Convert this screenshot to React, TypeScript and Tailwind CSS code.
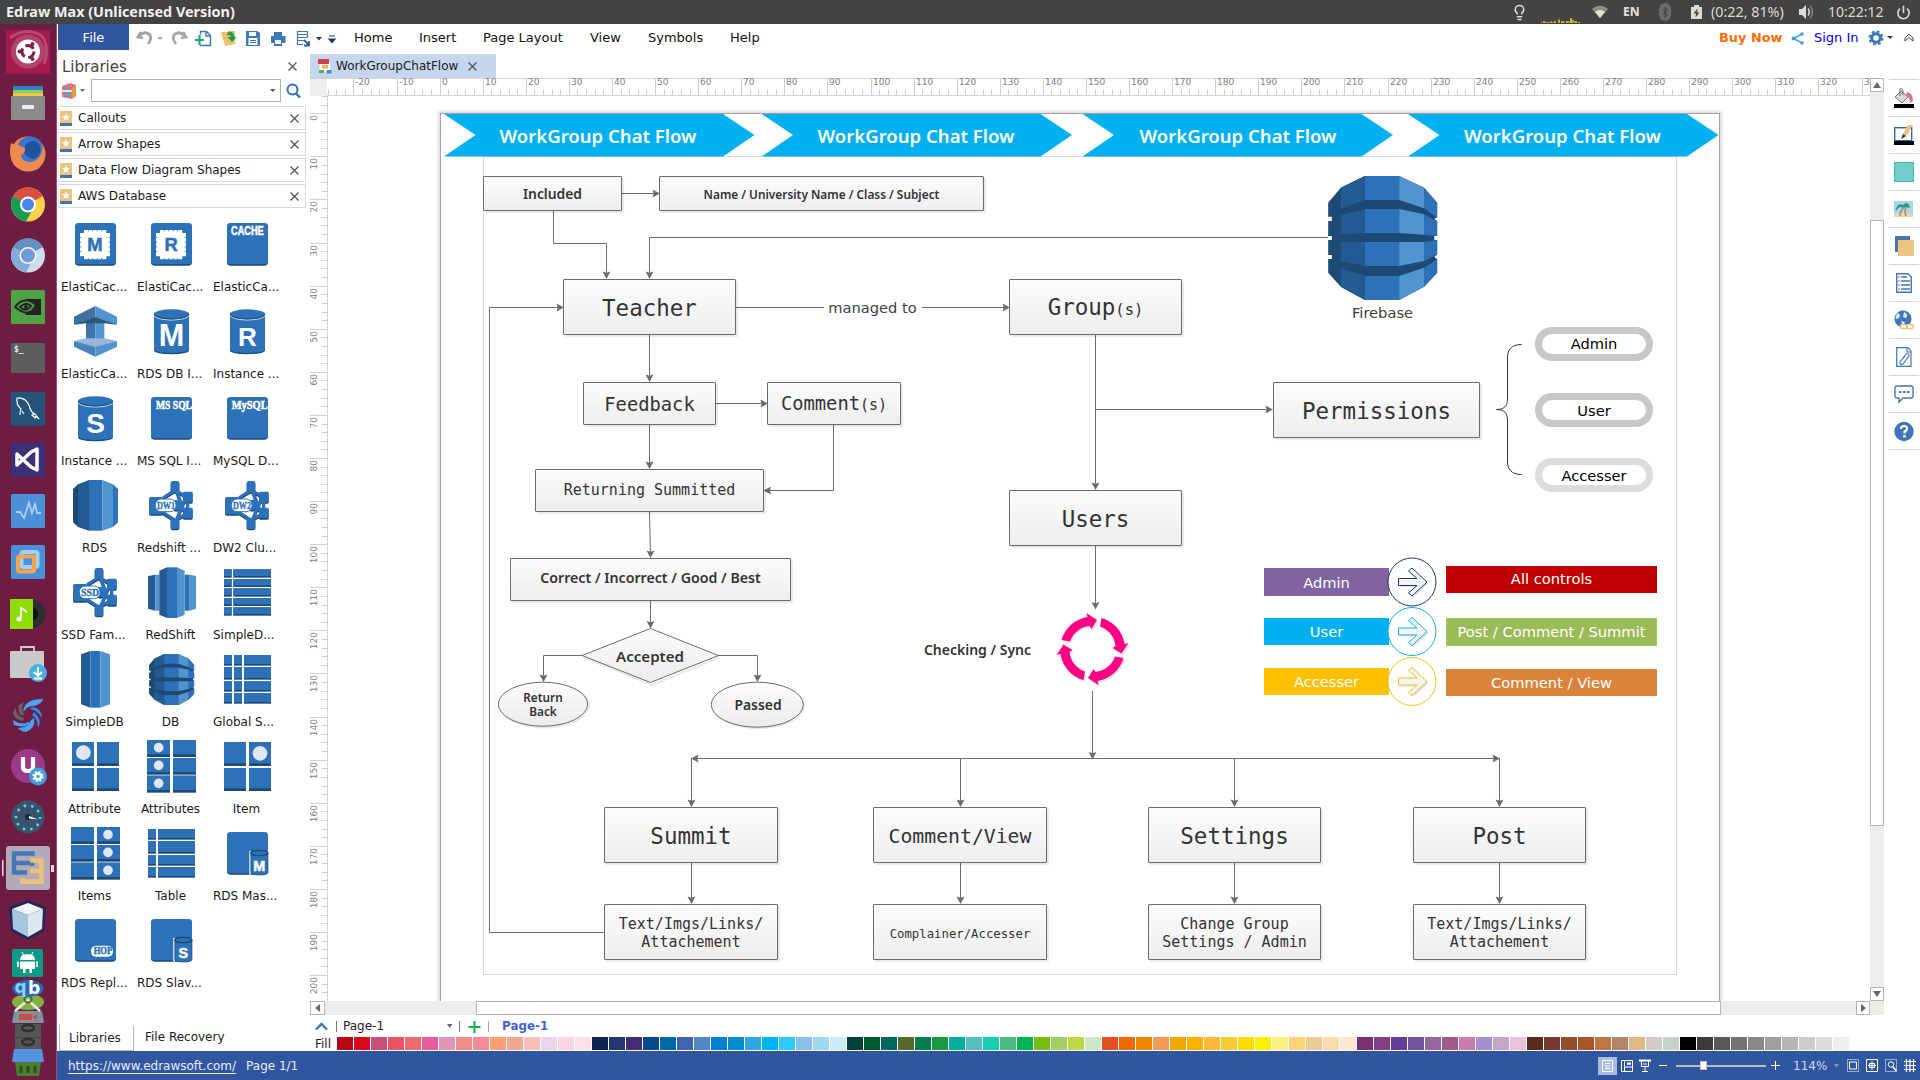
import React from "react";
import { Bluetooth, Volume2, Power, Lightbulb } from "lucide-react";

const BLUE = "#2d72b8";
const DARK = "#1d4a75";
const MID = "#235a92";
const LIGHT = "#5294cf";

/* ---------- library shape icons (viewBox 201 x 174) ---------- */

const Tile = () => (
  <>
    <rect x="42" y="25" width="123" height="124" rx="10" fill={DARK} />
    <rect x="42" y="21" width="123" height="124" rx="10" fill={BLUE} />
  </>
);

const Chip = ({ letter }: { letter: string }) => (
  <>
    <Tile />
    <path d="M69 42H136V51H147V121H136V130H69V121H57V51H69Z" fill="#fff" />
    <path d="M82 41V46M95 41V46M109 41V46M122 41V46M82 126V131M95 126V131M109 126V131M122 126V131M56 64H61M56 78H61M56 93H61M56 107H61M143 64H148M143 78H148M143 93H148M143 107H148" stroke={BLUE} strokeWidth="2.500" />
    <text x="102" y="105" textAnchor="middle" fontSize="55" fontWeight="700" fill={BLUE} stroke={BLUE} strokeWidth="1.500" fontFamily="Liberation Sans, sans-serif">{letter}</text>
  </>
);

const Banner = ({ text, serif, x, w }: { text: string; serif?: boolean; x: number; w: number }) => (
  <>
    <Tile />
    <text x={x} y="58" textLength={w} lengthAdjust="spacingAndGlyphs" fontSize="36" fontWeight="700" fill="#fff" stroke="#fff" strokeWidth="1.500" fontFamily={serif ? "Liberation Serif, serif" : "Liberation Sans, sans-serif"}>{text}</text>
  </>
);

const Cylinder = ({ letter, size }: { letter: string; size: number }) => (
  <>
    <path d="M51 34V142Q51 153 103 154Q156 153 156 142V34Z" fill={DARK} />
    <path d="M51 32V139Q51 149 103 150Q156 149 156 139V32Z" fill={BLUE} />
    <path d="M51 38Q60 50 103 51Q147 50 156 38" stroke="#fff" strokeWidth="2.500" fill="none" />
    <ellipse cx="103.500" cy="33" rx="52.500" ry="14" fill={BLUE} />
    <path d="M51 33Q56 47 103 48Q151 47 156 33" stroke={DARK} strokeWidth="3" fill="none" />
    <text x="103.500" y="128" textAnchor="middle" fontSize={size} fontWeight="700" fill="#fff" fontFamily="Liberation Sans, sans-serif">{letter}</text>
  </>
);

const Spool = () => (
  <>
    <path d="M75 60H103V112H75Z" fill="#3d73a6" />
    <path d="M103 60H130V112H103Z" fill={LIGHT} />
    <path d="M39 41L103 9V52L39 65Z" fill="#41729f" />
    <path d="M168 41L103 9V52L168 65Z" fill={LIGHT} />
    <path d="M39 65L103 43L168 65L130 61H75Z" fill="#2f5578" />
    <path d="M39 114L75 106H130L168 114L103 134Z" fill="#9ab4da" />
    <path d="M39 114L103 132V161L39 131Z" fill="#4b83b8" />
    <path d="M168 114L103 132V161L168 131Z" fill={LIGHT} />
  </>
);

const Barrel = () => (
  <>
    <path d="M36 36L51 22V150L36 136Z" fill={DARK} />
    <path d="M51 22L84 9V161L51 150Z" fill={MID} />
    <path d="M84 9H124V161H84Z" fill={BLUE} />
    <path d="M124 9L156 22V150L124 161Z" fill={LIGHT} />
    <path d="M156 22L171 36V136L156 150Z" fill={BLUE} />
  </>
);

const Cluster = ({ text }: { text: string }) => (
  <>
    {[4, 0].map((dy) => (
      <g key={dy} transform={`translate(0 ${dy})`} fill={dy ? DARK : BLUE} stroke={dy ? DARK : BLUE}>
        <rect x="101" y="12" width="26" height="34" rx="6" strokeWidth="0" />
        <rect x="101" y="124" width="26" height="32" rx="6" strokeWidth="0" />
        <rect x="138" y="44" width="29" height="32" rx="4" strokeWidth="0" />
        <rect x="138" y="92" width="29" height="32" rx="4" strokeWidth="0" />
        <path d="M113 40L78 62M113 40L150 58M113 128L78 106M113 128L150 110M152 60V110M118 40L144 108M118 128L146 62" fill="none" strokeWidth="9" />
        <rect x="36" y="60" width="42" height="52" rx="5" strokeWidth="0" />
        <circle cx="118" cy="84" r="16" strokeWidth="0" />
      </g>
    ))}
    <rect x="55" y="66" width="62" height="38" rx="17" fill="#fff" stroke={BLUE} strokeWidth="3" />
    <text x="60" y="96" textLength="54" lengthAdjust="spacingAndGlyphs" fontSize="31" fontWeight="700" fill={BLUE} stroke={BLUE} strokeWidth="1" fontFamily="Liberation Serif, serif">{text}</text>
  </>
);

const RedShift = () => (
  <>
    <path d="M33 36L55 32V140L33 134Z" fill={MID} />
    <path d="M55 32H68V140H55Z" fill={LIGHT} />
    <path d="M143 32H158V140H143Z" fill={BLUE} />
    <path d="M158 32L177 36V134L158 140Z" fill={LIGHT} />
    <path d="M67 20L90 10V162L67 152Z" fill={MID} />
    <path d="M90 10H120V162H90Z" fill={BLUE} />
    <path d="M120 10L143 20V152L120 162Z" fill={LIGHT} />
  </>
);

const Prism = () => (
  <>
    <path d="M60 10L88 0V170L60 160Z" fill={MID} />
    <path d="M88 0H118V170H88Z" fill={BLUE} />
    <path d="M118 0L147 10V160L118 170Z" fill={LIGHT} />
  </>
);

const Cells = ({ cols, rows, dots = [], r = 0 }: { cols: number[][]; rows: number[][]; dots?: number[][]; r?: number }) => (
  <>
    {cols.map(([x0, x1]) => rows.map(([y0, y1]) => (
      <g key={`${x0}-${y0}`}>
        <rect x={x0} y={y0} width={x1 - x0} height={y1 - y0} fill={DARK} />
        <rect x={x0} y={y0} width={x1 - x0} height={y1 - y0 - (r ? 8 : 5)} fill={BLUE} />
      </g>
    )))}
    {dots.map(([cx, cy]) => <circle key={`${cx}-${cy}`} cx={cx} cy={cy} r={r} fill="#e1e7f2" />)}
  </>
);

const MiniDb = ({ letter }: { letter: string }) => (
  <>
    <Tile />
    <path d="M111 149V80H165" stroke="#fff" strokeWidth="4" fill="none" />
    <path d="M114 84V142Q114 150 139 150Q165 150 165 142V84Z" fill={BLUE} stroke={DARK} strokeWidth="2" />
    <ellipse cx="139" cy="84" rx="26" ry="8" fill={BLUE} stroke={DARK} strokeWidth="4" />
    <text x="139" y="138" textAnchor="middle" fontSize="43" fontWeight="700" fill="#fff" stroke="#fff" strokeWidth="1.500" fontFamily="Liberation Sans, sans-serif">{letter}</text>
  </>
);

const Hop = () => (
  <>
    <Tile />
    <rect x="90" y="101" width="66" height="33" rx="15" fill="#fff" />
    <text x="98" y="127" textLength="56" lengthAdjust="spacingAndGlyphs" fontSize="29" fontWeight="700" fill={BLUE} stroke={BLUE} strokeWidth="1.500" fontFamily="Liberation Serif, serif">HOP</text>
  </>
);

/* Faceted database ball, used in the palette and on the board */
const DbBall = () => (
  <>
    <path d="M118 608L149 563L208 528H292L353 563L385 608V652L378 656L385 664V708H378V720H385V764L378 770L385 778V818L353 860L292 900H208L149 860L118 818V777H127V765H118V720H127V708H118V663H127V650H118Z" fill={DARK} />
    <path d="M149 563L208 528V600L149 626ZM149 645L208 627V699L149 704ZM149 727L208 726V798L149 783ZM149 804L208 828V900L149 860Z" fill="#225a91" />
    <path d="M208 528H292V600H208ZM208 627H292V699H208ZM208 726H292V798H208ZM208 828H292V900H208Z" fill={BLUE} />
    <path d="M292 528L353 563V625L292 600ZM292 627L353 643V704L292 699ZM292 726H353V783L292 798ZM292 828L353 803V860L292 900Z" fill={LIGHT} />
    <path d="M353 563L385 608V654L353 625ZM353 643L385 665V708L353 704ZM353 726L385 720V763L353 783ZM353 803L385 778V818L353 860Z" fill={BLUE} />
  </>
);

const rows3 = [[6, 57], [60, 110], [113, 164]];
const rows4 = [[12, 44], [48, 86], [91, 122], [126, 158]];
const shapes: { label: string; icon: React.ReactNode; cut?: boolean }[] = [
  { label: "ElastiCac...", icon: <Chip letter="M" />, cut: true },
  { label: "ElastiCac...", icon: <Chip letter="R" />, cut: true },
  { label: "ElasticCa...", icon: <Banner text="CACHE" x={54} w={98} />, cut: true },
  { label: "ElasticCa...", icon: <Spool />, cut: true },
  { label: "RDS DB I...", icon: <Cylinder letter="M" size={92} />, cut: true },
  { label: "Instance ...", icon: <Cylinder letter="R" size={78} />, cut: true },
  { label: "Instance ...", icon: <Cylinder letter="S" size={84} />, cut: true },
  { label: "MS SQL I...", icon: <Banner text="MS SQL" serif x={57} w={108} />, cut: true },
  { label: "MySQL D...", icon: <Banner text="MySQL" serif x={56} w={108} />, cut: true },
  { label: "RDS", icon: <Barrel /> },
  { label: "Redshift ...", icon: <Cluster text="DW1" />, cut: true },
  { label: "DW2 Clu...", icon: <Cluster text="DW2" />, cut: true },
  { label: "SSD Fam...", icon: <Cluster text="SSD" />, cut: true },
  { label: "RedShift", icon: <RedShift /> },
  { label: "SimpleD...", icon: <Cells cols={[[33, 56], [61, 174]]} rows={[[16, 41], [45, 69], [73, 98], [102, 126], [130, 155]]} />, cut: true },
  { label: "SimpleDB", icon: <Prism /> },
  { label: "DB", icon: <g transform="translate(-23.500 -208) scale(.506 .411)"><DbBall /></g> },
  { label: "Global S...", icon: <Cells cols={[[33, 57], [63, 87], [93, 174]]} rows={rows4} />, cut: true },
  { label: "Attribute", icon: <Cells cols={[[33, 99], [108, 174]]} rows={[[12, 84], [90, 159]]} dots={[[67, 44]]} r={22} /> },
  { label: "Attributes", icon: <Cells cols={[[30, 99], [108, 177]]} rows={rows3} dots={[[65, 29], [65, 82], [65, 136]]} r={14.5} /> },
  { label: "Item", icon: <Cells cols={[[33, 99], [108, 174]]} rows={[[12, 84], [90, 159]]} dots={[[141, 46]]} r={22} /> },
  { label: "Items", icon: <Cells cols={[[30, 99], [108, 177]]} rows={rows3} dots={[[141, 29], [141, 82], [141, 136]]} r={14.5} /> },
  { label: "Table", icon: <Cells cols={[[33, 57], [63, 174]]} rows={rows4} /> },
  { label: "RDS Mas...", icon: <MiniDb letter="M" />, cut: true },
  { label: "RDS Repl...", icon: <Hop />, cut: true },
  { label: "RDS Slav...", icon: <MiniDb letter="S" />, cut: true },
];

/* ---------- launcher ---------- */

const launcher: React.ReactNode[] = [
  <>
    <rect x="6" y="4" width="44" height="44" rx="3" fill="#a41c4e" />
    <path d="M10 12Q26 0 42 10Q50 22 44 38" stroke="#c9668a" strokeWidth="3" fill="none" opacity=".6" />
    <circle cx="28" cy="25.500" r="17" fill="#c26b8c" opacity=".5" />
    <circle cx="28" cy="25.500" r="12" fill="#fff" />
    <circle cx="28" cy="25.500" r="6" fill="none" stroke="#7b1f46" strokeWidth="3" strokeDasharray="9 3.500" />
    <circle cx="19.500" cy="25.500" r="2" fill="#7b1f46" /><circle cx="32.500" cy="18" r="2" fill="#7b1f46" /><circle cx="32.500" cy="33" r="2" fill="#7b1f46" />
  </>,
  <>
    <rect x="13" y="9" width="30" height="5" fill="#2c7fd0" /><rect x="13" y="13" width="30" height="4" fill="#7ed552" /><rect x="13" y="16" width="30" height="4" fill="#f3c548" />
    <rect x="11" y="19" width="34" height="24" rx="1" fill="#8b8b8b" /><rect x="22" y="28" width="12" height="4" rx="1" fill="#eee" />
  </>,
  <>
    <circle cx="28" cy="26" r="17.500" fill="#ee8b4c" />
    <circle cx="30" cy="21.500" r="13" fill="#3c76cf" />
    <path d="M27 15Q36 10 40 18Q42 27 34 31Q25 30 23 22Z" fill="#23529c" />
    <path d="M11 15Q14 17 18 17L25 20Q26 25 21 27Q22 35 32 34Q42 31 43 18Q48 32 38 41Q24 47 14 37Q8 27 11 15Z" fill="#ee8b4c" />
  </>,
  <>
    <circle cx="28" cy="25.500" r="17" fill="#fbd04b" />
    <path d="M28 25.500L13.300 17A17 17 0 0 1 42.700 17Z" fill="#dc4e41" />
    <path d="M28 25.500L13.300 17A17 17 0 0 0 26 42.400L34 28Z" fill="#199a57" />
    <circle cx="28" cy="25.500" r="8" fill="#fff" /><circle cx="28" cy="25.500" r="6" fill="#4a84ee" />
  </>,
  <>
    <circle cx="28" cy="25.500" r="17" fill="#cddcee" />
    <path d="M28 25.500L13.300 17A17 17 0 0 1 42.700 17Z" fill="#6590c0" />
    <path d="M28 25.500L13.300 17A17 17 0 0 0 26 42.400L34 28Z" fill="#84acda" />
    <circle cx="28" cy="25.500" r="8.500" fill="#fff" /><circle cx="28" cy="25.500" r="7" fill="#6f9ad2" />
  </>,
  <>
    <rect x="11" y="9" width="34" height="34" rx="1.500" fill="#4da345" />
    <path d="M26 18H41V34H26Z" fill="#222" />
    <path d="M15 26Q24 14 36 24Q29 38 15 26Z" fill="#4da345" stroke="#222" strokeWidth="1.800" />
    <path d="M20 26Q26 20 31 25Q26 32 20 26Z" fill="none" stroke="#222" strokeWidth="1.800" /><circle cx="26" cy="26" r="2" fill="#222" />
  </>,
  <>
    <rect x="11" y="11" width="34" height="30" rx="1" fill="#5d5d5d" />
    <text x="14" y="20" fontSize="8" fontWeight="700" fill="#eee" fontFamily="DejaVu Sans Mono, monospace">$_</text>
  </>,
  <>
    <rect x="11" y="9" width="34" height="34" rx="1.500" fill="#24537a" />
    <path d="M20 32Q20 28 21 26Q16 22 17 15Q25 14 29 22Q31 30 35 31L39 36M22 28L24 31M35 31L32 32L35 35L36 33L39 36" stroke="#fff" strokeWidth="1.200" fill="none" />
  </>,
  <>
    <rect x="11" y="9" width="34" height="34" rx="1.500" fill="#3d3079" />
    <path d="M17 20L31 33L37 36V15L31 18L17 31Z" fill="none" stroke="#fff" strokeWidth="3.500" strokeLinejoin="round" />
  </>,
  <>
    <rect x="11" y="9" width="34" height="34" rx="1.500" fill="#4b8fd9" />
    <path d="M16 27H20L24 33L29 18L32 28L35 19L37 28H41" stroke="#a9d0f7" strokeWidth="1.800" fill="none" />
  </>,
  <>
    <rect x="11" y="9" width="34" height="34" rx="1.500" fill="#4b8fd9" />
    <rect x="21.500" y="16" width="16" height="15" rx="2" fill="none" stroke="#a6cdf5" strokeWidth="4" />
    <rect x="18" y="20.500" width="16" height="15" rx="2" fill="none" stroke="#f6a54c" strokeWidth="4" />
  </>,
  <>
    <circle cx="31" cy="27" r="14.500" fill="#2b2f30" /><circle cx="31" cy="27" r="7" fill="#111" />
    <rect x="10" y="12" width="23" height="30" fill="#90dd08" />
    <path d="M21 32V21L26 24V26" stroke="#fff" strokeWidth="1.600" fill="none" /><circle cx="19" cy="32" r="2.500" fill="#fff" />
  </>,
  <>
    <path d="M21 13V9H34V13" stroke="#ccc" strokeWidth="1.800" fill="none" />
    <rect x="10" y="13" width="34" height="27" rx="1" fill="#cacaca" />
    <circle cx="38" cy="35" r="9" fill="#48b0e0" /><path d="M38 29V37M34 34L38 38L42 34M34 40.500H42" stroke="#fff" strokeWidth="1.800" fill="none" />
  </>,
  <>
    <g transform="translate(0 1)">
      <path d="M43 9Q24 9 23 22Q28 15 34 16Q42 14 43 9Z" fill="#4aa4f5" />
      <path d="M32 17Q42 18 42 28Q37 20 30 19ZM34 22Q43 30 38 38Q38 29 32 25Z" fill="#2f8be6" />
      <path d="M34 28Q36 38 26 42Q20 41 18 38Q30 37 31 30ZM30 32Q26 39 14 35L13 30Q22 36 28 32Z" fill="#4aa4f5" />
      <path d="M23 31Q14 30 13 22L16 18Q16 27 24 28ZM22 26Q17 22 19 15L24 12Q20 20 24 24Z" fill="#6b6269" />
    </g>
  </>,
  <>
    <circle cx="28" cy="26" r="17" fill="#9a3a88" />
    <path d="M23 17V27Q23 31 28 31Q33 31 33 27V17" stroke="#fff" strokeWidth="4.200" fill="none" />
    <circle cx="38" cy="36.500" r="9" fill="#3f9fd6" /><circle cx="38" cy="36.500" r="3" fill="none" stroke="#fff" strokeWidth="2.400" />
    <circle cx="38" cy="36.500" r="4.800" fill="none" stroke="#fff" strokeWidth="1.600" strokeDasharray="2 1.770" />
  </>,
  <>
    <circle cx="28" cy="26" r="16.500" fill="#38536b" />
    <circle cx="28" cy="26.500" r="12" fill="none" stroke="#5fd6dc" strokeWidth="2.600" strokeDasharray="2.500 5.040" strokeDashoffset="1" />
    <circle cx="28" cy="26" r="3" fill="#1b2a36" /><path d="M29 25L38 28.500L29 27.500Z" fill="#fff" />
  </>,
  <>
    <rect x="6" y="4" width="44" height="44" rx="3" fill="#b3a9b8" />
    <path d="M34.500 11.500H14V30.500H27M14 21H32V24" stroke="#4377b6" strokeWidth="4.400" fill="none" />
    <path d="M30 18.500H41.500V39.500H22.500V36M30 29H41" stroke="#ecc479" strokeWidth="4.400" fill="none" />
    <rect x="2" y="18" width="1.500" height="16" fill="#ddd" /><rect x="51" y="23" width="3" height="7" fill="#ddd" />
  </>,
  <>
    <path d="M28 7L46 14L44 38L28 47L11 38L9 14Z" fill="#1c2a57" />
    <path d="M28 10L43 16L28 22L12 16Z" fill="#f0f6f8" /><path d="M12 16L28 22V44L13 36Z" fill="#a9c4dd" /><path d="M43 16L28 22V44L42 36Z" fill="#dbe8ee" />
  </>,
];

/* ---------- diagram ---------- */

const MONO = "font-['DejaVu_Sans_Mono',monospace]";
const NOTO = "font-['Noto_Sans',sans-serif] font-semibold";

const Box = ({ className, children }: { className: string; children: React.ReactNode }) => (
  <div className={`absolute flex items-center justify-center text-center whitespace-nowrap rounded-[1px] border border-[#6b6b6b] bg-linear-to-b from-[#fcfcfc] to-[#eeeeee] text-[#333] shadow-[2px_2px_1px_rgba(0,0,0,0.09)] ${className}`}>
    {children}
  </div>
);

const Note = ({ className, children }: { className: string; children: React.ReactNode }) => (
  <div className={`absolute -translate-x-1/2 whitespace-nowrap leading-5 ${className}`}>{children}</div>
);

const Head = ({ x, y, a }: { x: number; y: number; a: number }) => (
  <path d="M0 0L-7.500 -4L-6.300 0L-7.500 4Z" fill="#6b6b6b" transform={`translate(${x} ${y}) rotate(${a})`} />
);

const lines = [
  "M622 193.500H658", "M553.500 211V243.500H606.500V278", "M1328 237.500H649.500V278",
  "M604 932.500H489.500V307.500H562", "M736 307.500H824", "M922 307.500H1008", "M649.500 335V381",
  "M716 403.500H766", "M833.500 425V490.500H765", "M649.500 425V468", "M649.500 512L650.500 557", "M650.500 601V628",
  "M582 655.500H543.500V681", "M718 655.500H757.500V681", "M1095.500 335V489", "M1095 409.500H1272", "M1095.500 546V608",
  "M1092.500 691V758", "M692 758.500H1499", "M691.500 758V806", "M960.500 758V806", "M1234.500 758V806", "M1499.500 758V806",
  "M691.500 863V903", "M960.500 863V903", "M1234.500 863V903", "M1499.500 863V903",
];
const heads: [number, number, number][] = [
  [660, 193.5, 0], [606.5, 279, 90], [649.5, 279, 90], [564, 307.5, 0], [1010, 307.5, 0], [649.5, 382, 90],
  [768, 403.5, 0], [763.5, 490.5, 180], [649.5, 469, 90], [650.5, 558, 90], [650.5, 628.5, 90], [543.5, 682, 90], [757.5, 682, 90],
  [1095.5, 490, 90], [1273, 409.5, 0], [1095.5, 609.5, 90], [1092.5, 759.5, 90], [691, 758.5, 180], [1500, 758.5, 0],
  [691.5, 807, 90], [960.5, 807, 90], [1234.5, 807, 90], [1499.5, 807, 90],
  [691.5, 904, 90], [960.5, 904, 90], [1234.5, 904, 90], [1499.5, 904, 90],
];

const Board = () => (
  <div className="relative min-w-0 flex-1 overflow-hidden bg-white">
    <div className="absolute -left-[328px] -top-[96px] h-[1080px] w-[1920px]">
      <div className="absolute left-[440px] top-[113px] h-[1000px] w-[1280px] border border-[#a3a3a3] bg-white shadow-[0_0_3px_2px_#dcdcdc]" />
      <div className="absolute left-[483px] top-[156px] h-[819px] w-[1194px] border border-[#d9d9d9]" />
      <svg className="absolute left-0 top-0" width="1920" height="1080" fill="none">
        <defs>
          <linearGradient id="soft" x1="0" y1="0" x2="0" y2="1"><stop offset="0" stopColor="#fcfcfc" /><stop offset="1" stopColor="#ececec" /></linearGradient>
        </defs>
        {[444, 761.5, 1082.5, 1408].map((x) => (
          <path key={x} d={`M${x} 114H${x + 279}L${x + 310.5} 135L${x + 279} 156.500H${x}L${x + 31.500} 135Z`} fill="#00b0f0" />
        ))}
        {lines.map((d) => <path key={d} d={d} stroke="#6b6b6b" />)}
        <g stroke="#6b6b6b" fill="url(#soft)">
          <path d="M584 657.500L652 685L720 657.500" stroke="#e9e9e9" strokeWidth="2" fill="none" />
          <path d="M582 655.500L650.500 628.500L718.500 655.500L650.500 682.500Z" />
          <ellipse cx="544.500" cy="705.500" rx="45" ry="22.500" stroke="#e6e6e6" />
          <ellipse cx="758.500" cy="706" rx="46" ry="22.500" stroke="#e6e6e6" />
          <ellipse cx="543" cy="704.200" rx="44.700" ry="22" />
          <ellipse cx="757.300" cy="704.700" rx="46" ry="22.500" />
        </g>
        {heads.map(([x, y, a]) => <Head key={`${x} ${y}`} x={x} y={y} a={a} />)}
        {[0, 90, 180, 270].map((a) => (
          <g key={a} transform="translate(1092.500 649)">
            <path transform={`translate(1.500 2) rotate(${a})`} d="M-31 -9A32 32 0 0 1 -5 -31.500L-6 -36L4.500 -29L-1 -20L-3 -24A24 24 0 0 0 -23.500 -8Z" fill="#e4e4e4" />
            <path transform={`rotate(${a})`} d="M-31 -9A32 32 0 0 1 -5 -32L-6 -36L4.500 -29L-1 -20L-3 -23A23 23 0 0 0 -22.500 -7.500Z" fill="#ff0084" />
          </g>
        ))}
        <g transform="translate(1280 0) scale(.4082 .3333)"><DbBall /></g>
        <path d="M1521.500 344.500C1511 344.500 1507.500 350 1507.500 358V399C1507.500 406 1504 409.500 1496.500 409.500C1504 409.500 1507.500 413 1507.500 420V461C1507.500 469 1511 474.500 1521.500 474.500" stroke="#333" />
      </svg>

      <Note className={`left-[598px] top-[125.500px] text-[18.550px] text-white ${NOTO}`}>WorkGroup Chat Flow</Note>
      <Note className={`left-[916px] top-[125.500px] text-[18.550px] text-white ${NOTO}`}>WorkGroup Chat Flow</Note>
      <Note className={`left-[1238px] top-[125.500px] text-[18.550px] text-white ${NOTO}`}>WorkGroup Chat Flow</Note>
      <Note className={`left-[1562.500px] top-[125.500px] text-[18.550px] text-white ${NOTO}`}>WorkGroup Chat Flow</Note>

      <Box className={`left-[483px] top-[176px] h-[35px] w-[139px] text-[13.850px] ${NOTO}`}>Included</Box>
      <Box className={`left-[659px] top-[176px] h-[35px] w-[325px] text-[11.850px] ${NOTO}`}>Name / University Name / Class / Subject</Box>
      <Box className={`left-[563px] top-[279px] h-[56px] w-[173px] pt-0.5 text-[22.500px] ${MONO}`}>Teacher</Box>
      <Box className={`left-[1009px] top-[279px] h-[56px] w-[173px] pt-[3px] text-[22.500px] ${MONO}`}><span>Group<span className="text-[15.500px]">(s)</span></span></Box>
      <Box className={`left-[583px] top-[382px] h-[43px] w-[133px] pt-0.5 text-[18.800px] ${MONO}`}>Feedback</Box>
      <Box className={`left-[767px] top-[382px] h-[43px] w-[134px] pt-0.5 text-[18.800px] ${MONO}`}><span>Comment<span className="text-[15px]">(s)</span></span></Box>
      <Box className={`left-[535px] top-[469px] h-[43px] w-[229px] pb-0.5 text-[15px] ${MONO}`}>Returning Summitted</Box>
      <Box className={`left-[510px] top-[558px] h-[43px] w-[281px] pb-[3px] text-[14.200px] ${NOTO}`}>Correct / Incorrect / Good / Best</Box>
      <Box className={`left-[1009px] top-[490px] h-[56px] w-[173px] pt-0.5 text-[22.500px] ${MONO}`}>Users</Box>
      <Box className={`left-[1273px] top-[382px] h-[56px] w-[207px] pt-0.5 text-[22.500px] ${MONO}`}>Permissions</Box>

      <Box className={`left-[604px] top-[807px] h-[56px] w-[174px] pt-0.5 text-[22.500px] ${MONO}`}>Summit</Box>
      <Box className={`left-[873px] top-[807px] h-[56px] w-[174px] pt-[3px] text-[19.800px] ${MONO}`}>Comment/View</Box>
      <Box className={`left-[1148px] top-[807px] h-[56px] w-[173px] pt-0.5 text-[22.500px] ${MONO}`}>Settings</Box>
      <Box className={`left-[1413px] top-[807px] h-[56px] w-[173px] pt-0.5 text-[22.500px] ${MONO}`}>Post</Box>
      <Box className={`left-[604px] top-[904px] h-[56px] w-[174px] pt-0.5 text-[15px] leading-[18px] ${MONO}`}>Text/Imgs/Links/<br />Attachement</Box>
      <Box className={`left-[873px] top-[904px] h-[56px] w-[174px] pt-1 text-[12.300px] ${MONO}`}>Complainer/Accesser</Box>
      <Box className={`left-[1148px] top-[904px] h-[56px] w-[173px] pt-0.5 text-[15px] leading-[18px] ${MONO}`}>Change Group<br />Settings / Admin</Box>
      <Box className={`left-[1413px] top-[904px] h-[56px] w-[173px] pt-0.5 text-[15px] leading-[18px] ${MONO}`}>Text/Imgs/Links/<br />Attachement</Box>

      <Note className={`left-[650px] top-[646px] text-[15.100px] text-[#333] ${NOTO}`}>Accepted</Note>
      <Note className={`left-[543px] top-[690px] text-center text-[11.800px] leading-[14px]! text-[#333] ${NOTO}`}>Return<br />Back</Note>
      <Note className={`left-[758px] top-[695px] text-[13.900px] text-[#333] ${NOTO}`}>Passed</Note>
      <Note className={`left-[977.500px] top-[640px] text-[14px] text-[#333] ${NOTO}`}>Checking / Sync</Note>
      <Note className="left-[872.500px] top-[298px] text-[14.670px] text-[#404040]">managed to</Note>
      <Note className="left-[1382.500px] top-[303px] text-[14.670px] text-[#404040]">Firebase</Note>

      <div className="absolute left-[1535px] top-[327px] flex h-[34px] w-[118px] items-center justify-center rounded-[18px] border-[7px] border-[#c8c8c8] bg-white text-[14.670px] text-black">Admin</div>
      <div className="absolute left-[1535px] top-[393px] flex h-[34px] w-[118px] items-center justify-center rounded-[18px] border-[7px] border-[#c8c8c8] bg-white pt-px text-[14.670px] text-black">User</div>
      <div className="absolute left-[1535px] top-[458px] flex h-[34px] w-[118px] items-center justify-center rounded-[18px] border-[7px] border-[#dcdcdc] bg-white pt-0.5 text-[14.670px] text-black">Accesser</div>

      <div className="absolute left-[1264px] top-[568px] flex h-[28px] w-[125px] items-center justify-center bg-[#8064a2] pt-px text-[14.670px] text-white">Admin</div>
      <div className="absolute left-[1264px] top-[618px] flex h-[27px] w-[125px] items-center justify-center bg-[#00b0f0] pt-px text-[14.670px] text-white">User</div>
      <div className="absolute left-[1264px] top-[668px] flex h-[27px] w-[125px] items-center justify-center bg-[#ffc000] text-[14.670px] text-white">Accesser</div>
      <div className="absolute left-[1446px] top-[566px] flex h-[27px] w-[211px] items-center justify-center bg-[#c00000] pb-0.5 text-[14.670px] text-white">All controls</div>
      <div className="absolute left-[1446px] top-[618px] flex h-[28px] w-[211px] items-center justify-center border border-[#92d050] bg-[#9bbb59] text-[14.670px] text-white">Post / Comment / Summit</div>
      <div className="absolute left-[1446px] top-[669px] flex h-[27px] w-[211px] items-center justify-center bg-[#d9833b] pt-px text-[14.670px] text-white">Comment / View</div>
      <svg className="absolute left-[1380px] top-[550px]" width="64" height="164" fill="none">
        {[{ y: 32, c: "#1f3864" }, { y: 81.5, c: "#12aeea" }, { y: 131.5, c: "#f7bf16" }].map(({ y, c }) => (
          <g key={y} transform={`translate(32 ${y})`} stroke={c}>
            <circle r="24" fill="#fff" />
            <path d="M-13.500 -3.500H5L-3.500 -11L0 -14L15 0L0 14L-3.500 11L5 3.500H-13.500Z" fill="#e2e2e2" stroke="none" transform="translate(1.500 1.500)" />
            <path d="M-13.500 -3.500H5L-3.500 -11L0 -14L15 0L0 14L-3.500 11L5 3.500H-13.500Z" fill="#f2f5fa" />
          </g>
        ))}
      </svg>
    </div>
  </div>
);

/* ---------- rulers ---------- */

const STEP = 43.09;
const range = (a: number, b: number) => Array.from({ length: b - a + 1 }, (_, i) => a + i);

const HRuler = () => (
  <svg width="1543" height="18" className="shrink-0" fill="none">
    <path d="M0 .5H1543M0 17.500H1543" stroke="#d4d4d4" />
    {range(-13, 167).map((i) => {
      const x = Math.round(112.6 + (i * STEP) / 5) + 0.5;
      return <path key={i} d={i % 5 ? `M${x} 12V17` : `M${x} 1V17`} stroke="#cfcfcf" />;
    })}
    {range(-2, 33).map((k) => (
      <text key={k} x={Math.round(112.6 + k * STEP) + 2} y="7" fontSize="9" fill="#808080" fontFamily="DejaVu Sans, sans-serif">{k * 10}</text>
    ))}
  </svg>
);

const VRuler = () => (
  <svg width="18" height="905" className="shrink-0" fill="none">
    <path d="M17.500 0V905" stroke="#d4d4d4" />
    {range(-2, 103).map((i) => {
      const y = Math.round(17.3 + (i * STEP) / 5) + 0.5;
      return <path key={i} d={i % 5 ? `M12 ${y}H17` : `M0 ${y}H17`} stroke="#cfcfcf" />;
    })}
    {range(0, 20).map((k) => (
      <text key={k} transform={`translate(7 ${Math.round(17.3 + k * STEP) + 2}) rotate(-90)`} textAnchor="end" fontSize="9" fill="#808080" fontFamily="DejaVu Sans, sans-serif">{k * 10}</text>
    ))}
  </svg>
);

/* ---------- small pieces ---------- */

const Tri = ({ className = "", d = "M0 0H7L3.500 4Z" }: { className?: string; d?: string }) => (
  <svg width="7" height="8" viewBox="0 -2 7 8" className={`shrink-0 ${className}`} fill="currentColor"><path d={d} /></svg>
);

const Cross = () => (
  <svg width="9" height="9" className="shrink-0" stroke="#555" strokeWidth="1.300"><path d="M.5 .5L8.500 8.500M8.500 .5L.5 8.500" /></svg>
);

const ArrowBtn = ({ d, className }: { d: string; className: string }) => (
  <div className={`flex shrink-0 items-center justify-center border border-[#b5b5b5] bg-white ${className}`}>
    <svg width="10" height="10" fill="#666"><path d={d} /></svg>
  </div>
);

const palette = `b70915 d9081c c8507a e95365 ed6a70 e75d9c e195b9 f08e88 f28d98 ff9f78 efa990 f6bfbb ead5e9 ffd3e6 ffe0e8
0f2350 233870 432c78 054a8f 0068a5 4163b0 5585c6 0080cf 008ecb 2ea8e2 00b3f3 2fcafc 88c0ea a0d8ef ccebf6
004138 005a30 006860 566b2b 007e4c 1c9742 00af9e 53bfc1 19cdb2 48bc83 00b156 7bba11 a2d163 bdd845 cde8c8
e4501f ec6a00 f28600 f49b57 f3a800 ffb100 ffb93a f7cb35 ffdb00 fff000 fcf184 fdd375 eacc97 ffdcad fde8d0
783272 823f83 663d96 71549a 95679f 9d5a8a cb7bae a890d0 c7a5cb ecc2dc
5a2a1d 763a30 954c2b aa5428 c0773f b28569 dfb886 d3cbc7 c8d2ca
000000 3e393a 595858 727372 878888 9ea09f b3b5b5 cccdcd dcdddd eeeeee`.split(/\s+/);

const dockIcons: React.ReactNode[] = [
  <>
    <path d="M1 9L7 3L14 9L8 15Z" fill="#d8d8d8" stroke="#777" /><path d="M6 8V1Q8 -1 9 3V7" stroke="#666" fill="none" /><path d="M13 4Q19 5 19 13L16 15Q16 9 12 7Z" fill="#df7096" /><rect y="16" width="20" height="4" fill="#000" />
  </>,
  <>
    <rect x=".7" y="2.700" width="17" height="13" fill="#fff" stroke="#2f6db0" strokeWidth="1.400" /><path d="M14 0H19L13 10L8 14L9 9Z" fill="#ecc17a" /><path d="M7 14L9 9L12 11Z" fill="#333" /><rect y="16" width="20" height="4" fill="#000" />
  </>,
  <rect x=".5" y=".5" width="19" height="19" fill="#72ccc8" stroke="#45b5ae" />,
  <>
    <rect y="2" width="19" height="16" fill="#a8d8ec" /><path d="M0 15Q10 12 19 16V18H0Z" fill="#ead9ae" /><path d="M1 12Q4 3 9 6Q14 1 16 9L12 8L10 9L6 8Z" fill="#1e9f80" /><path d="M10 8Q6 12 6 17M12 8Q10 12 12 17" stroke="#c9805a" strokeWidth="1.600" fill="none" />
  </>,
  <>
    <rect x="1" y="0" width="15" height="16" fill="#4478b5" /><rect x="4" y="4" width="16" height="16" fill="#edc57e" />
  </>,
  <>
    <path d="M2.700 .7H14L17.300 4V19.300H2.700Z" fill="#fff" stroke="#4076b4" strokeWidth="1.400" /><path d="M4 4H6M4 8H6M4 12H6M4 16H6" stroke="#ee7b8c" strokeWidth="1.600" /><path d="M7 4H13M7 8H16M7 12H16M7 16H16" stroke="#3f78b8" strokeWidth="1.600" />
  </>,
  <>
    <circle cx="9" cy="9" r="8.500" fill="#3f78b8" /><path d="M4 3Q7 4 5 8L2 9Q1 6 4 3ZM10 2Q15 4 12 8L9 7ZM7 11L11 12L9 16Z" fill="#fff" opacity=".85" /><rect x="6.500" y="14.500" width="6" height="4" rx="1.500" fill="#fff" stroke="#ecc17a" strokeWidth="1.600" /><rect x="13" y="14.500" width="6" height="4" rx="1.500" fill="#fff" stroke="#ecc17a" strokeWidth="1.600" />
  </>,
  <>
    <path d="M2.700 .7H14L17 4V19.300H2.700Z" fill="#fff" stroke="#4076b4" strokeWidth="1.200" /><path d="M6 15L12 7Q15 6 15 9L9 17Q6 19 6 15L11 9M13 1V5H17" stroke="#4076b4" fill="none" strokeWidth="1.100" />
  </>,
  <>
    <path d="M3 2H17Q19 2 19 4V12Q19 14 17 14H9L5 18V14H3Q1 14 1 12V4Q1 2 3 2Z" fill="#fff" stroke="#4076b4" strokeWidth="1.400" /><path d="M5 8H7.500M9 8H11.500M13 8H15.500" stroke="#3f78b8" strokeWidth="2.200" />
  </>,
  <>
    <circle cx="10" cy="10.500" r="9.700" fill="#3c76b6" /><path d="M7 8Q7 5 10 5Q13 5 13 7.800Q13 9.500 10.500 10.500V12.500" stroke="#fff" strokeWidth="2.200" fill="none" /><rect x="9.200" y="14" width="2.500" height="2.500" fill="#fff" />
  </>,
];

export default function App() {
  return (
    <div className="flex h-[1080px] w-[1920px] flex-col overflow-hidden bg-white font-['DejaVu_Sans',sans-serif] text-[12px] leading-4 text-[#1a1a1a]">
      {/* system bar */}
      <header className="flex h-6 shrink-0 items-center bg-[#434343] font-['Noto_Sans',sans-serif] text-[#dfdbd2]">
        <div className="flex-1 pl-1.5 text-[14.400px] font-bold text-[#f2f1ee]">Edraw Max (Unlicensed Version)</div>
        <div className="-ml-px flex w-6 justify-center"><Lightbulb size={17} strokeWidth={2.200} /></div>
        <div className="ml-[10px] w-10 self-end">
          <svg width="40" height="6" fill="none"><path d="M0 5V4M3 5V3M7 5V4M10 5V3.500M14 5V3M18 5V1.500M21 5V3M26 5V3M30 5V0M32 5V2M35 5V3M38 5V4" stroke="#e8a317" strokeWidth="2" /><path d="M5 5V4M12 5V4M23 5V3M28 5V3M33 5V3" stroke="#4caf50" strokeWidth="2" /></svg>
        </div>
        <div className="ml-[10px] w-[18px]">
          <svg width="18" height="14"><path d="M9 13L1 4Q9 -3 17 4Z" fill="#8d8c89" /><path d="M9 13L4 7Q9 3 14 7Z" fill="#e4e0d8" /></svg>
        </div>
        <div className="ml-[14px] w-[19px] text-[12px] font-extrabold">EN</div>
        <div className="ml-[17px] flex h-[18px] w-[12px] items-center justify-center rounded-full bg-[#6a6a6a] text-[#3b3b3b]"><Bluetooth size={13} strokeWidth={1.800} /></div>
        <div className="ml-5 w-[11px]">
          <svg width="11" height="14"><path d="M3 0H8V2H11V14H0V2H3Z" fill="#dfdbd2" /><path d="M6.500 3.500L2.500 8.500H5L4.500 12.500L8.500 7.500H6Z" fill="#434343" /></svg>
        </div>
        <div className="ml-[9px] w-[76px] text-[14.300px]">(0:22, 81%)</div>
        <div className="ml-3 w-[17px]">
          <svg width="16" height="16" fill="none"><path d="M0 5H3L7 1V15L3 11H0Z" fill="#dfdbd2" /><path d="M9 4.500Q11.500 8 9 11.500" stroke="#dfdbd2" strokeWidth="1.600" /><path d="M11 1.500Q16 8 11 14.500" stroke="#86847f" strokeWidth="1.600" /></svg>
        </div>
        <div className="ml-3 w-[58px] text-[14px]">10:22:12</div>
        <div className="ml-2 w-[26px]"><Power size={15} strokeWidth={2.500} className="ml-0.5" /></div>
      </header>

      <div className="flex min-h-0 flex-1">
        {/* launcher */}
        <nav className="flex w-[57px] shrink-0 flex-col border-r border-[#93527a] bg-[#6f1c43] pt-0.5">
          {launcher.map((icon, i) => <svg key={i} width="56" height="51" className="shrink-0" fill="none">{icon}</svg>)}
          <svg width="56" height="135" className="shrink-0" fill="none">
            <rect x="12" y="5" width="31" height="28" rx="1.500" fill="#0d9a85" />
            <path d="M20 16Q20 10 27.500 10Q35 10 35 16Z M20 17.500H35V25H20Z M17 17.500H18.800V23H17ZM36.200 17.500H38V23H36.200ZM23 25H25.500V29H23ZM29.500 25H32V29H29.500Z" fill="#fff" /><path d="M22 8L24 12M33 8L31 12" stroke="#fff" />
            <path d="M14 67H42L44 79H12Z" fill="#7d94a0" /><rect x="19" y="70" width="13" height="6" fill="#c94f43" /><path d="M32 73L37 70V76Z" fill="#c94f43" />
            <ellipse cx="28" cy="58" rx="16" ry="8" fill="#83b243" />
            <path d="M15 67L28 56L40 67" stroke="#e4ede0" strokeWidth="2.500" fill="none" /><circle cx="28" cy="55" r="3.500" fill="none" stroke="#4f6b30" strokeWidth="2" />
            <ellipse cx="28" cy="44.500" rx="15.500" ry="8.500" fill="#2a67b5" />
            <text x="14.500" y="49" fontSize="17" fontWeight="700" fill="#8fd0f5" fontFamily="DejaVu Sans, sans-serif">q</text>
            <text x="28" y="50" fontSize="17" fontWeight="700" fill="#fff" fontFamily="DejaVu Sans, sans-serif">b</text>
            <path d="M15 80H41V107H15Z" fill="#565656" /><path d="M15 93.500H41" stroke="#444" />
            <ellipse cx="28" cy="84" rx="6" ry="3" stroke="#303030" strokeWidth="2.500" /><ellipse cx="28" cy="98" rx="6" ry="3" stroke="#303030" strokeWidth="2.500" />
            <path d="M14 105H42L44 118H12Z" fill="#5294e2" />
            <path d="M15 118H41L39 132H17Z" fill="#4c7d33" /><path d="M21 122V129M28 122V129M35 122V129" stroke="#2c4e1d" strokeWidth="3" />
          </svg>
        </nav>

        <div className="flex min-w-0 flex-1 flex-col">
          <div className="flex min-h-0 flex-1 flex-col pl-px">
            {/* menu bar */}
            <div className="flex h-[30px] shrink-0 items-start text-[13px] text-[#111]">
              <div className="flex h-[26px] w-[71px] items-center justify-center bg-[#3056a0] pt-px text-white">File</div>
              <div className="flex h-[28px] flex-1 items-center">
                <svg width="216" height="28" fill="none" className="ml-1">
                  <path d="M8 8L5 13L10 14M6 12Q12 6 17 11Q19 15 15 20" stroke="#a3a3a3" strokeWidth="2.800" />
                  <path d="M24 13H30L27 16Z" fill="#aaa" />
                  <path d="M50 8L53 13L48 14M52 12Q46 6 41 11Q39 15 43 20" stroke="#a9a9a9" strokeWidth="2.800" />
                  <path d="M67.500 7.500H73.500L77.500 11.500V21.500H67.500Z M73 7.500V12H77.500" stroke="#3f78b8" strokeWidth="1.400" fill="#fff" /><path d="M66 10.500V20.500M62 15.500H71" stroke="#fff" strokeWidth="4" /><path d="M66.500 11V21M62 16H71" stroke="#13a67b" strokeWidth="2" />
                  <path d="M88 8H94L96 7H102V20L92 22Z" fill="#ecc06b" /><path d="M95 8Q101 7 101 13H103.500L99 18L94.500 13H98Q98 11 94 11Z" fill="#1c9a52" />
                  <path d="M113 7H124L127 9V22H113Z" fill="#3f78b8" /><rect x="116" y="8" width="7" height="4" fill="#fff" /><rect x="115.500" y="14" width="9" height="7" fill="#fff" /><path d="M117 16.500H123M117 18.500H123" stroke="#3f78b8" />
                  <path d="M141 8H149V12H152.500V19H149V22H141V19H138V12H141Z" fill="#3f78b8" /><path d="M142 16H148V20H142Z" fill="#fff" />
                  <path d="M165 7.500H174M165 10.500H174M165 13.500H174M165 16.500H172M165 20.500H170M164.500 7V21M174.500 7V14" stroke="#3f78b8" strokeWidth="1.200" /><path d="M171 16L176 21M176 17V21.500H171" stroke="#2d5f9f" strokeWidth="1.800" />
                  <path d="M183 13H189L186 16.500Z" fill="#22375f" /><path d="M196 12H202M196 15H202L199 18.500Z" stroke="#22375f" strokeWidth="1.200" fill="#22375f" />
                </svg>
                <div className="ml-[5px] w-[65px]">Home</div>
                <div className="w-[64px]">Insert</div>
                <div className="w-[107px]">Page Layout</div>
                <div className="w-[58px]">View</div>
                <div className="w-[82px]">Symbols</div>
                <div>Help</div>
                <div className="ml-auto flex h-[25px] items-center pr-[6px]">
                  <div className="w-[72px] text-[12.900px] font-bold text-[#ff6c00]">Buy Now</div>
                  <svg width="14" height="13" fill="none"><path d="M12 1.500L2.500 6.500L12 11.500" stroke="#38a3ec" strokeWidth="1.500" /><circle cx="2.500" cy="6.500" r="2" fill="#38a3ec" /><circle cx="11" cy="2" r="1.800" fill="#38a3ec" /><circle cx="11" cy="11" r="1.800" fill="#38a3ec" /></svg>
                  <div className="ml-[9px] w-[54px] text-[#0000f0]">Sign In</div>
                  <svg width="16" height="16" fill="none"><circle cx="8" cy="8" r="4.300" stroke="#3c76b6" strokeWidth="3" /><circle cx="8" cy="8" r="6.500" stroke="#3c76b6" strokeWidth="2" strokeDasharray="2.700 2.400" /></svg>
                  <svg width="6" height="6" className="ml-[3px]"><path d="M0 1H6L3 4Z" fill="#22375f" /></svg>
                  <svg width="10" height="10" fill="none" className="ml-[11px]" stroke="#444"><path d="M1 5L5 1L9 5V8L5 4.500L1 8Z" /></svg>
                </div>
              </div>
            </div>

            <div className="flex min-h-0 flex-1">
              {/* libraries panel */}
              <aside className="flex w-[248px] shrink-0 flex-col">
                <div className="flex h-[25px] shrink-0 items-center justify-between pl-1 pr-[9px] text-[15px] text-[#444]">Libraries<Cross /></div>
                <div className="flex h-[23px] shrink-0 items-center pl-1">
                  <svg width="14" height="16"><path d="M0 3L8 0L14 2V13L10 16L0 14Z" fill="#eb6f7f" /><path d="M3 4V14M7 4V15" stroke="#4aa3d8" strokeWidth="2" /><path d="M0 8H10" stroke="#f3e9c5" strokeWidth="2" /><path d="M10 5L14 3V13L10 16Z" fill="#d9a13c" /></svg>
                  <Tri className="ml-[3px] text-[#666]" d="M1 0H6L3.500 3Z" />
                  <div className="ml-[5px] flex h-[23px] w-[190px] items-center justify-end border border-[#b0b0b0] pr-1 text-[#555]"><Tri d="M1 0H6.500L3.700 3Z" /></div>
                  <svg width="16" height="16" fill="none" className="ml-[5px]" stroke="#2f6fb3"><circle cx="6.500" cy="6.500" r="5" strokeWidth="2" /><path d="M10 10.500L14 14.500" strokeWidth="2.400" /></svg>
                </div>
                <div className="mt-1 flex flex-col gap-0.5">
                  {["Callouts", "Arrow Shapes", "Data Flow Diagram Shapes", "AWS Database"].map((t) => (
                    <div key={t} className="flex h-6 items-center border border-[#d8d8d8] border-l-[#eee] pl-px pr-1.5">
                      <svg width="12" height="15" className="mr-[6px]"><rect width="12" height="12" fill="#ecc27c" /><rect y="12" width="12" height="3" fill="#3f74b4" /><path d="M6 2L7.200 5H10L7.800 7L8.600 10L6 8.300L3.400 10L4.200 7L2 5H4.800Z" fill="#fff" /></svg>
                      <span className="flex-1">{t}</span>
                      <Cross />
                    </div>
                  ))}
                </div>
                <div className="ml-[3px] mt-2 grid grid-cols-[67px_67px_67px] gap-x-[9px]">
                  {shapes.map((s, i) => (
                    <div key={i} className="h-[87px] whitespace-nowrap">
                      <svg width="67" height="58" viewBox="0 0 201 174" className="mb-[5px] block" fill="none">{s.icon}</svg>
                      <div className={s.cut ? "text-left" : "text-center"}>{s.label}</div>
                    </div>
                  ))}
                </div>
                <div className="mt-auto flex h-[26px] shrink-0">
                  <div className="ml-px flex w-[75px] items-center border border-t-0 border-[#b5b5b5] pl-[9px]">Libraries</div>
                  <div className="pl-[11px] pt-1">File Recovery</div>
                </div>
              </aside>

              {/* editor */}
              <main className="ml-1 flex w-[1574px] shrink-0 flex-col">
                <div className="flex h-6 w-[186px] shrink-0 items-center bg-[#c7d6ef] pl-2">
                  <svg width="14" height="15" fill="none"><path d="M1 1H10L13 4V14H1Z" fill="#fff" stroke="#ccc" /><rect width="11" height="5" fill="#c8434a" /><rect x="4" y="6" width="6" height="3.500" fill="#e9b64d" /><rect x="1" y="11" width="5" height="3" fill="#57a94e" /><rect x="8.500" y="11" width="5" height="3.500" fill="#3b8fdd" /></svg>
                  <span className="ml-1 mr-[10px]">WorkGroupChatFlow</span><Cross />
                </div>
                <div className="flex h-[923px] shrink-0">
                  <div className="flex w-[1560px] flex-col">
                    <div className="flex h-[18px]">
                      <div className="w-[17px] border-t border-[#ccc] bg-[#efefef]" />
                      <HRuler />
                    </div>
                    <div className="flex min-h-0 flex-1"><VRuler /><Board /></div>
                  </div>
                  <div className="flex w-[14px] flex-col bg-[#ededed]">
                    <ArrowBtn className="h-[14px]" d="M1 8L5 2L9 8Z" />
                    <div className="mt-[128px] h-[606px] border border-[#b5b5b5] bg-white" />
                    <ArrowBtn className="mt-auto h-[14px]" d="M1 2L5 8L9 2Z" />
                  </div>
                </div>
                <div className="flex h-[14px] shrink-0 bg-[#ededed]">
                  <ArrowBtn className="w-[15px]" d="M7 1L2 5L7 9Z" />
                  <div className="ml-[151px] w-[1245px] border border-[#b5b5b5] bg-white" />
                  <ArrowBtn className="ml-auto w-[14px]" d="M3 1L8 5L3 9Z" />
                  <div className="w-[14px] bg-[#efebe7]" />
                </div>
                <div className="flex h-[22px] shrink-0 items-center pl-[5px]">
                  <svg width="13" height="9" fill="none"><path d="M1 7.500L6.500 2L12 7.500" stroke="#3b7ab8" strokeWidth="2.400" /></svg>
                  <div className="ml-[8px] h-[11px] w-px bg-[#777]" />
                  <div className="ml-[6px] w-[103px]">Page-1</div>
                  <Tri className="text-[#666]" d="M1 0H6.500L3.700 4Z" />
                  <div className="ml-[6px] h-[11px] w-px bg-[#777]" />
                  <svg width="13" height="13" fill="none" className="ml-2"><path d="M6.500 1V13M.5 7H12.500" stroke="#09b050" strokeWidth="2" /></svg>
                  <div className="ml-[7px] h-[11px] w-px bg-[#aaa]" />
                  <div className="ml-[13px] text-[11.900px] font-bold text-[#3c66cf]">Page-1</div>
                </div>
                <div className="flex h-[14px] shrink-0 items-start pl-[5px]">
                  <div className="w-[22px] leading-[14px]">Fill</div>
                  <div className="flex gap-px">
                    {palette.map((c) => <div key={c} className="h-[13px] w-4" style={{ backgroundColor: `#${c}` }} />)}
                  </div>
                </div>
              </main>

              {/* right dock */}
              <div className="ml-[5px] mt-[25px] flex w-[30px] flex-col border-t border-[#d8d8d8]">
                {dockIcons.map((icon, i) => (
                  <div key={i} className="flex h-[37px] items-center justify-center border-b border-[#d8d8d8]">
                    <svg width="20" height="20" fill="none" className="overflow-visible">{icon}</svg>
                  </div>
                ))}
              </div>
            </div>
          </div>

          {/* status bar */}
          <footer className="flex h-[29px] shrink-0 items-center bg-[#3056a0] pl-[11px] text-[#e8eefb]">
            <span className="underline underline-offset-3">https://www.edrawsoft.com/</span>
            <span className="ml-[10px]">Page 1/1</span>
            <div className="ml-auto flex items-center pr-[4px]">
              <div className="flex h-[18px] w-[19px] items-center justify-center bg-[#a9bbde]">
                <svg width="11" height="12" fill="none" stroke="#fff"><path d="M.5 .5H10.500V11.500H.5ZM3 3.500H8M3 6H8M3 8.500H8" /></svg>
              </div>
              <svg width="12" height="12" fill="none" stroke="#fff" className="ml-[4px]"><path d="M.5 .5H11.500V11.500H.5ZM3.500 0V12M6 4H9.500M3.500 7H11" /><path d="M6 3.500H10" strokeWidth="2" /></svg>
              <svg width="12" height="13" fill="none" stroke="#fff" className="ml-[6px]"><path d="M0 1.500H12" strokeWidth="2" /><path d="M2.500 2V7.500H9.500V2M6 7.500V12M3 12.500H9M4 5H8" /></svg>
              <div className="ml-[8px] h-px w-[8px] bg-white" />
              <div className="ml-[9px] flex h-[10px] w-[90px] items-center">
                <div className="h-[2px] w-[24px] bg-[#b9bbc0]" /><div className="h-[9px] w-[7px] border border-[#ccc] bg-white" /><div className="h-[2px] flex-1 bg-[#b9bbc0]" />
              </div>
              <svg width="9" height="9" stroke="#fff" className="ml-[5px]"><path d="M4.500 0V9M0 4.500H9" /></svg>
              <span className="ml-[13px] w-[43px] text-[#cdd8ef]">114%</span>
              <Tri className="-ml-[3px] text-[#8b8f99]" d="M1 0H6L3.500 4Z" />
              <svg width="12" height="13" fill="none" stroke="#fff" className="ml-[7px]"><path d="M.5 .5H11.500V12.500H.5Z" strokeDasharray="1 1" /><path d="M2.500 3H9.500V10H2.500Z" /></svg>
              <svg width="12" height="13" fill="none" stroke="#fff" className="ml-[7px]"><path d="M.5 .5H11.500V12.500H.5ZM6 2V11M2 6.500H10M3.500 4.500H8.500V8.500H3.500Z" /></svg>
              <svg width="12" height="13" fill="none" stroke="#fff" className="ml-[7px]"><path d="M.5 .5H11.500V12.500H.5Z" strokeDasharray="1 1" /><circle cx="6" cy="5.500" r="2.700" /><path d="M8 8L11.500 12" strokeWidth="1.600" /></svg>
              <svg width="12" height="13" fill="none" stroke="#fff" className="ml-[7px]"><path d="M2.500 0V13M6 0V13M9.500 0V13M0 2.500H12M0 6.500H12M0 10.500H12" strokeWidth="1.200" /></svg>
            </div>
          </footer>
        </div>
      </div>
    </div>
  );
}
